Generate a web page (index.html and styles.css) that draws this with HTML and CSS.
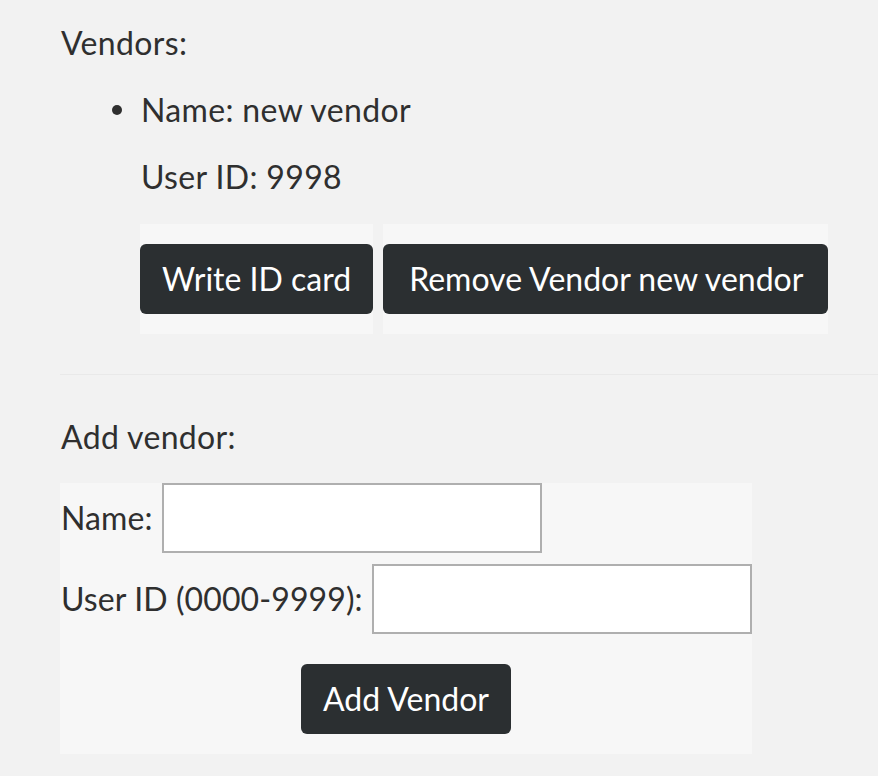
FILE: index.html
```html
<!DOCTYPE html>
<html>
<head>
<meta charset="utf-8">
<link rel="stylesheet" href="styles.css">
</head>
<body>
<div class="page">
  <p class="heading">Vendors:</p>
  <ul class="vendor-list">
    <li class="vendor">
      <p class="line">Name: new vendor</p>
      <p class="line line-id">User ID: 9998</p>
      <div class="actions">
        <div class="action-box"><button class="btn">Write ID card</button></div>
        <div class="action-box"><button class="btn btn-wide">Remove Vendor new vendor</button></div>
      </div>
    </li>
  </ul>
  <hr class="divider">
  <p class="heading heading-add">Add vendor:</p>
  <form class="add-form">
    <div class="row">
      <label class="label">Name:</label>
      <input class="field" type="text">
    </div>
    <div class="row row-second">
      <label class="label">User ID (0000-9999):</label>
      <input class="field" type="text">
    </div>
    <div class="submit-row">
      <button class="btn" type="button">Add Vendor</button>
    </div>
  </form>
</div>
</body>
</html>
```

FILE: styles.css
```css
html, body {
  margin: 0;
  padding: 0;
  background: #f2f2f2;
}

body {
  font-family: Lato, "Open Sans", sans-serif;
  font-size: 32px;
  letter-spacing: 0.35px;
  line-height: 38px;
  color: #2f2f2f;
}

.page {
  padding: 24px 0 0 60px;
}

p {
  margin: 0;
}

.heading {
  padding-left: 1px;
}

.vendor-list {
  margin: 29px 0 0 0;
  padding: 0 0 0 81px;
  list-style: none;
}

.vendor {
  position: relative;
}

.vendor::before {
  content: "";
  position: absolute;
  left: -29px;
  top: 14px;
  width: 10px;
  height: 10px;
  border-radius: 50%;
  background: #2f2f2f;
}

.line-id {
  margin-top: 29px;
}

.actions {
  display: flex;
  gap: 10px;
  margin-top: 28px;
  margin-left: -1px;
}

.action-box {
  background: #f7f7f7;
  padding: 20px 0;
}

.btn {
  display: block;
  height: 70px;
  padding: 0 22px;
  border: none;
  border-radius: 6px;
  background: #2b2f31;
  color: #ffffff;
  font-family: Lato, "Open Sans", sans-serif;
  font-size: 32px;
  letter-spacing: 0;
  line-height: 70px;
  cursor: pointer;
}

.btn-wide {
  padding: 0 25px 0 26px;
}

.divider {
  margin: 40px 0 0 0;
  border: none;
  height: 1px;
  background: #e9e9e9;
}

.heading-add {
  margin-top: 43px;
}

.add-form {
  margin-top: 27px;
  width: 692px;
  background: #f7f7f7;
  padding: 0 0 20px 0;
}

.row {
  display: flex;
  align-items: center;
  gap: 9px;
}

.row-second {
  margin-top: 11px;
}

.label {
  padding-left: 1px;
  white-space: nowrap;
  letter-spacing: 0.1px;
  flex-shrink: 0;
}

.field {
  box-sizing: border-box;
  flex-shrink: 0;
  width: 380px;
  height: 70px;
  margin: 0;
  border: 2px solid #afafaf;
  background: #ffffff;
  font-family: inherit;
  font-size: 31px;
}

.submit-row {
  display: flex;
  justify-content: center;
  margin-top: 30px;
}
```
